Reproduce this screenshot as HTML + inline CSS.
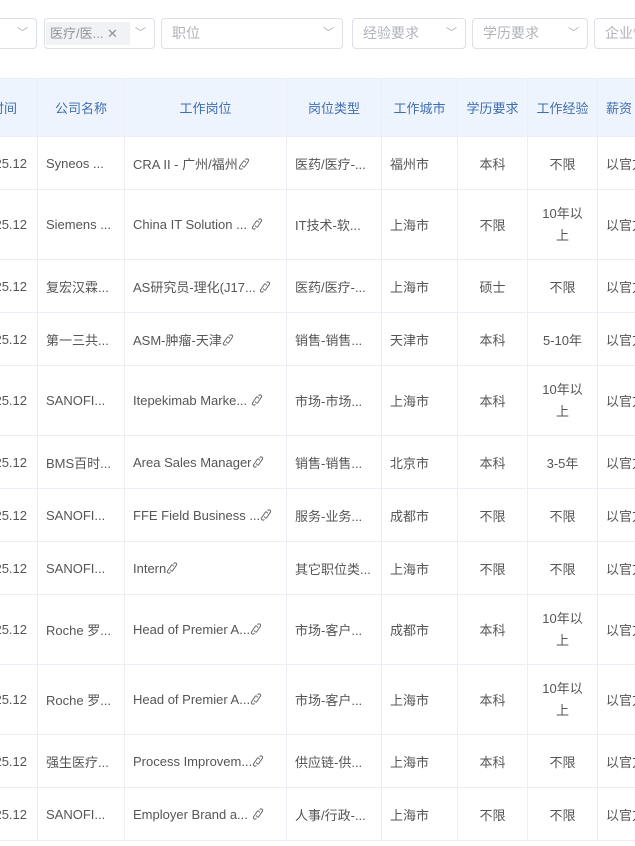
<!DOCTYPE html>
<html><head><meta charset="utf-8"><style>
body{margin:0;width:635px;height:846px;overflow:hidden;background:#fff;font-family:"Liberation Sans","Noto Sans CJK SC",sans-serif;font-size:13px;color:#555;position:relative}
.f{position:absolute;top:18px;height:31px;border:1px solid #dcdfe6;border-radius:4px;box-sizing:border-box;color:#b0b3b8;font-size:14px;line-height:29px;padding-left:10px}
.ar{position:absolute;right:8px;top:0;color:#a8abb2;font-size:11px}
.tag{position:absolute;left:1px;top:3px;height:23px;background:#f0f2f5;color:#909399;font-size:13px;line-height:23px;padding:0 4px;width:84px;box-sizing:border-box}
table{position:absolute;top:78px;left:-30px;width:700px;border-collapse:collapse;table-layout:fixed}
td,th{border:1px solid #ebeef5;padding:0 8px;overflow:hidden;white-space:nowrap;text-overflow:clip;font-weight:normal;box-sizing:border-box}
th{background:#eef4fd;color:#3f6eb0;height:58px;text-align:center}
td{height:53px}
tr.d td{height:70px}
.c{text-align:center}
.w{white-space:normal;line-height:22px}
.t{text-align:right;padding-right:10px}
svg{vertical-align:-1px}
</style></head><body>
<svg width="0" height="0" style="position:absolute"><defs><symbol id="l" viewBox="0 0 12 12"><path d="M7.5 1.5l1 -0.5a1.5 1.5 0 0 1 2 2l-4 6a1.5 1.5 0 0 1-2-1.5M4.5 10.5l-1 .5a1.5 1.5 0 0 1-2-2l4-6a1.5 1.5 0 0 1 2 1.5" fill="none" stroke="#666" stroke-width="1"/></symbol></defs></svg>
<div class="f" style="left:-10px;width:47px"><span class="ar">﹀</span></div>
<div class="f" style="left:44px;width:111px;padding:0"><div class="tag">医疗/医... ✕</div><span class="ar">﹀</span></div>
<div class="f" style="left:161px;width:182px">职位<span class="ar">﹀</span></div>
<div class="f" style="left:352px;width:114px">经验要求<span class="ar">﹀</span></div>
<div class="f" style="left:472px;width:116px">学历要求<span class="ar">﹀</span></div>
<div class="f" style="left:594px;width:60px">企业性</div>
<table>
<colgroup><col style="width:67px"><col style="width:87px"><col style="width:162px"><col style="width:95px"><col style="width:76px"><col style="width:70px"><col style="width:70px"><col style="width:73px"></colgroup>
<tr><th>时间</th><th>公司名称</th><th>工作岗位</th><th>岗位类型</th><th>工作城市</th><th>学历要求</th><th>工作经验</th><th style="text-align:left">薪资</th></tr>
<tr><td class="t">2025.12</td><td>Syneos ...</td><td>CRA II - 广州/福州<svg width="12" height="12"><use href="#l"/></svg></td><td>医药/医疗-...</td><td>福州市</td><td class="c">本科</td><td class="c">不限</td><td>以官方</td></tr>
<tr class="d"><td class="t">2025.12</td><td>Siemens ...</td><td>China IT Solution ... <svg width="12" height="12"><use href="#l"/></svg></td><td>IT技术-软...</td><td>上海市</td><td class="c">不限</td><td class="c w">10年以<br>上</td><td>以官方</td></tr>
<tr><td class="t">2025.12</td><td>复宏汉霖...</td><td>AS研究员-理化(J17... <svg width="12" height="12"><use href="#l"/></svg></td><td>医药/医疗-...</td><td>上海市</td><td class="c">硕士</td><td class="c">不限</td><td>以官方</td></tr>
<tr><td class="t">2025.12</td><td>第一三共...</td><td>ASM-肿瘤-天津<svg width="12" height="12"><use href="#l"/></svg></td><td>销售-销售...</td><td>天津市</td><td class="c">本科</td><td class="c">5-10年</td><td>以官方</td></tr>
<tr class="d"><td class="t">2025.12</td><td>SANOFI...</td><td>Itepekimab Marke... <svg width="12" height="12"><use href="#l"/></svg></td><td>市场-市场...</td><td>上海市</td><td class="c">本科</td><td class="c w">10年以<br>上</td><td>以官方</td></tr>
<tr><td class="t">2025.12</td><td>BMS百时...</td><td>Area Sales Manager<svg width="12" height="12"><use href="#l"/></svg></td><td>销售-销售...</td><td>北京市</td><td class="c">本科</td><td class="c">3-5年</td><td>以官方</td></tr>
<tr><td class="t">2025.12</td><td>SANOFI...</td><td>FFE Field Business ...<svg width="12" height="12"><use href="#l"/></svg></td><td>服务-业务...</td><td>成都市</td><td class="c">不限</td><td class="c">不限</td><td>以官方</td></tr>
<tr><td class="t">2025.12</td><td>SANOFI...</td><td>Intern<svg width="12" height="12"><use href="#l"/></svg></td><td>其它职位类...</td><td>上海市</td><td class="c">不限</td><td class="c">不限</td><td>以官方</td></tr>
<tr class="d"><td class="t">2025.12</td><td>Roche 罗...</td><td>Head of Premier A...<svg width="12" height="12"><use href="#l"/></svg></td><td>市场-客户...</td><td>成都市</td><td class="c">本科</td><td class="c w">10年以<br>上</td><td>以官方</td></tr>
<tr class="d"><td class="t">2025.12</td><td>Roche 罗...</td><td>Head of Premier A...<svg width="12" height="12"><use href="#l"/></svg></td><td>市场-客户...</td><td>上海市</td><td class="c">本科</td><td class="c w">10年以<br>上</td><td>以官方</td></tr>
<tr><td class="t">2025.12</td><td>强生医疗...</td><td>Process Improvem...<svg width="12" height="12"><use href="#l"/></svg></td><td>供应链-供...</td><td>上海市</td><td class="c">本科</td><td class="c">不限</td><td>以官方</td></tr>
<tr><td class="t">2025.12</td><td>SANOFI...</td><td>Employer Brand a... <svg width="12" height="12"><use href="#l"/></svg></td><td>人事/行政-...</td><td>上海市</td><td class="c">不限</td><td class="c">不限</td><td>以官方</td></tr>
</table>
</body></html>
